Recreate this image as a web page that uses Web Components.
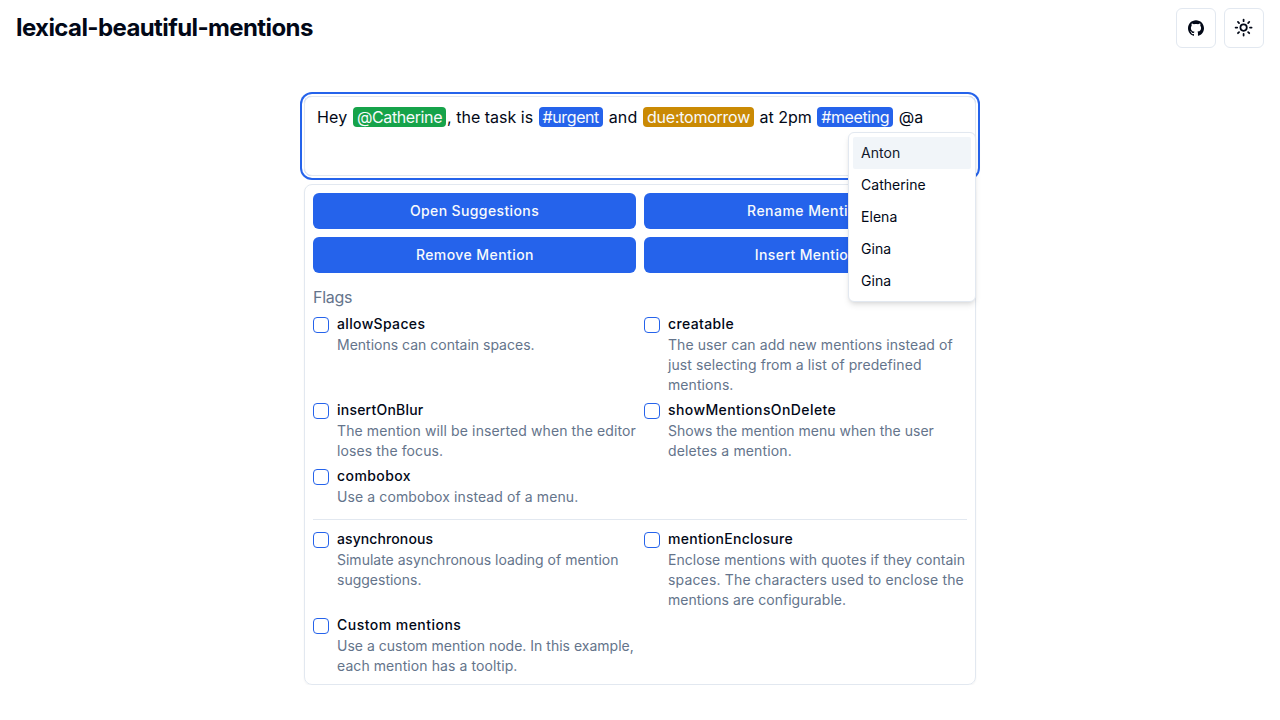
<!DOCTYPE html>
<html lang="en">
<head>
<meta charset="utf-8">
<title>lexical-beautiful-mentions</title>
<style>
  :root {
    --fg: #020817; --border: #e2e8f0; --primary: #2563eb;
    --muted: #64748b; --accent: #f1f5f9; --on-primary: #f8fafc;
  }
  body { margin: 0; background: #fff; color: var(--fg); font: 16px/24px Inter, sans-serif; }
</style>
</head>
<body>
<demo-app></demo-app>
<script>
  const define = (name, html) => {
    const template = document.createElement('template');
    template.innerHTML = html;
    customElements.define(name, class extends HTMLElement {
      constructor() {
        super();
        this.attachShadow({ mode: 'open' }).append(template.content.cloneNode(true));
      }
    });
  };

  define('icon-button', `
    <style>
      :host { display: block; }
      button { box-sizing: border-box; width: 40px; height: 40px; padding: 0; display: flex; align-items: center;
        justify-content: center; border: 1px solid var(--border); border-radius: 6px; background: #fff; color: var(--fg); }
    </style>
    <button><slot></slot></button>`);

  define('site-header', `
    <style>
      :host { display: flex; align-items: center; gap: 8px; padding: 8px 16px; }
      h1 { flex: 1; margin: 0; font-size: 24px; line-height: 32px; font-weight: 700; letter-spacing: -0.6px; }
      svg { display: block; }
    </style>
    <h1>lexical-beautiful-mentions</h1>
    <icon-button><svg width="16" height="16" viewBox="0 0 24 24" fill="currentColor"><path d="M12 .297c-6.63 0-12 5.373-12 12 0 5.303 3.438 9.8 8.205 11.385.6.113.82-.258.82-.577 0-.285-.01-1.04-.015-2.04-3.338.724-4.042-1.61-4.042-1.61C4.422 18.07 3.633 17.7 3.633 17.7c-1.087-.744.084-.729.084-.729 1.205.084 1.838 1.236 1.838 1.236 1.07 1.835 2.809 1.305 3.495.998.108-.776.417-1.305.76-1.605-2.665-.3-5.466-1.332-5.466-5.93 0-1.31.465-2.38 1.235-3.22-.135-.303-.54-1.523.105-3.176 0 0 1.005-.322 3.3 1.23.96-.267 1.98-.399 3-.405 1.02.006 2.04.138 3 .405 2.28-1.552 3.285-1.23 3.285-1.23.645 1.653.24 2.873.12 3.176.765.84 1.23 1.91 1.23 3.22 0 4.61-2.805 5.625-5.475 5.92.42.36.81 1.096.81 2.22 0 1.606-.015 2.896-.015 3.286 0 .315.21.69.825.57C20.565 22.092 24 17.592 24 12.297c0-6.627-5.373-12-12-12"/></svg></icon-button>
    <icon-button><svg width="19.2" height="19.2" viewBox="0 0 24 24" fill="none" stroke="currentColor" stroke-width="2.2" stroke-linecap="round" stroke-linejoin="round"><circle cx="12" cy="12" r="4"/><path d="M12 2v2M12 20v2m-7.07-17.07 1.41 1.41m11.32 11.32 1.41 1.41M2 12h2M20 12h2M6.34 17.66l-1.41 1.41M19.07 4.93l-1.41 1.41"/></svg></icon-button>`);

  define('mention-chip', `
    <style>
      :host { display: inline; margin: 0 1px; padding: 0 4px; border-radius: 4px; background: var(--chip, var(--primary)); color: var(--on-primary); }
      :host([kind="person"]) { --chip: #16a34a; }
      :host([kind="due"]) { --chip: #ca8a04; }
    </style><slot></slot>`);

  define('menu-item', `
    <style>
      :host { display: block; padding: 6px 8px; border-radius: 2px; font-size: 14px; line-height: 20px; }
      :host([selected]) { background: var(--accent); color: #0f172a; }
    </style><slot></slot>`);

  define('mention-menu', `
    <style>
      :host { display: block; box-sizing: border-box; width: 128px; padding: 4px; border: 1px solid var(--border);
        border-radius: 6px; background: #fff; box-shadow: 0 4px 6px -1px rgb(0 0 0 / .1), 0 2px 4px -2px rgb(0 0 0 / .1); }
    </style><slot></slot>`);

  define('mention-editor', `
    <style>
      :host { display: block; position: relative; box-sizing: border-box; height: 80px; padding: 8px 12px;
        border: 1px solid var(--border); border-radius: 8px; box-shadow: 0 0 0 2px #fff, 0 0 0 4px var(--primary); }
      ::slotted(mention-menu) { position: absolute; z-index: 2; top: 35px; right: -1px; }
    </style><slot></slot>`);

  define('action-button', `
    <style>
      :host { display: block; }
      button { display: block; width: 100%; height: 36px; padding: 0 12px; border: 0; border-radius: 6px; background: var(--primary);
        color: var(--on-primary); font: 500 14px/20px Inter, sans-serif; letter-spacing: var(--track, 0.38px); }
    </style><button><slot></slot></button>`);

  define('flag-option', `
    <style>
      :host { display: flex; gap: 8px; font-size: 14px; }
      .box { box-sizing: border-box; flex: none; width: 16px; height: 16px; border: 1px solid var(--primary); border-radius: 4px; }
      .text { display: grid; gap: 4px; align-content: start; }
      .name { font-weight: 500; line-height: 14px; }
      .note { color: var(--muted); line-height: 20px; }
    </style>
    <span class="box" role="checkbox" aria-checked="false"></span>
    <div class="text"><div class="name"><slot name="name"></slot></div><div class="note"><slot></slot></div></div>`);

  define('option-grid', `
    <style>:host { display: grid; grid-template-columns: 1fr 1fr; gap: 8px; }</style><slot></slot>`);

  define('option-panel', `
    <style>
      :host { display: block; padding: 8px; margin-top: 8px; border: 1px solid var(--border); border-radius: 8px;
        box-shadow: 0 1px 2px rgb(0 0 0 / .05); }
      h2 { margin: 12px 0 8px; font-size: 16px; line-height: 24px; font-weight: 400; letter-spacing: -.25px; color: var(--muted); }
      hr { height: 1px; margin: 12px 0; border: 0; background: var(--border); }
      action-button:nth-of-type(2) { --track: .45px; }
      action-button:nth-of-type(3) { --track: .42px; }
    </style>
    <option-grid>
      <action-button>Open Suggestions</action-button><action-button><span style="padding-left:2px">Rename Mention</span></action-button>
      <action-button><span style="padding-left:.8px">Remove Mention</span></action-button><action-button><span style="padding-left:.8px">Insert Mention</span></action-button>
    </option-grid>
    <h2>Flags</h2>
    <option-grid>
      <flag-option><span slot="name" style="letter-spacing:.35px">allowSpaces</span>Mentions can contain spaces.</flag-option>
      <flag-option style="letter-spacing:.08px"><span slot="name" style="letter-spacing:.37px">creatable</span>The user can add new mentions instead of just selecting from a list of predefined mentions.</flag-option>
      <flag-option style="letter-spacing:.11px"><span slot="name" style="letter-spacing:.22px">insertOnBlur</span>The mention will be inserted when the editor loses the focus.</flag-option>
      <flag-option style="letter-spacing:.01px"><span slot="name" style="letter-spacing:.41px">showMentionsOnDelete</span>Shows the mention menu when the user <span style="letter-spacing:.14px">deletes a mention.</span></flag-option>
      <flag-option style="letter-spacing:.1px"><span slot="name" style="letter-spacing:.42px">combobox</span>Use a combobox instead of a menu.</flag-option>
    </option-grid>
    <hr>
    <option-grid>
      <flag-option><span slot="name" style="letter-spacing:.1px">asynchronous</span>Simulate asynchronous loading of mention suggestions.</flag-option>
      <flag-option style="letter-spacing:.04px"><span slot="name" style="letter-spacing:.28px">mentionEnclosure</span>Enclose mentions with quotes if they contain <span style="letter-spacing:.16px">spaces. The characters used to enclose the</span> mentions are configurable.</flag-option>
      <flag-option style="letter-spacing:.01px"><span slot="name" style="letter-spacing:.47px">Custom mentions</span>Use a custom mention node. In this example, <span style="letter-spacing:.08px">each mention has a tooltip.</span></flag-option>
    </option-grid>`);

  define('demo-app', `
    <style>
      :host { display: block; }
      main { width: 672px; margin: 40px auto 0; }
      mention-menu { letter-spacing: .04px; }
    </style>
    <site-header></site-header>
    <main>
      <mention-editor><span style="letter-spacing:.15px">Hey </span><mention-chip kind="person" style="letter-spacing:-.4px">@Catherine</mention-chip><span>, the task is </span><mention-chip style="letter-spacing:-.4px">#urgent</mention-chip><span style="letter-spacing:.17px"> and </span><mention-chip kind="due" style="letter-spacing:-.25px">due:tomorrow</mention-chip> at 2pm <mention-chip style="letter-spacing:-.4px">#meeting</mention-chip> @a<mention-menu><menu-item selected>Anton</menu-item><menu-item>Catherine</menu-item><menu-item>Elena</menu-item><menu-item>Gina</menu-item><menu-item>Gina</menu-item></mention-menu></mention-editor>
      <option-panel></option-panel>
    </main>`);
</script>
</body>
</html>
